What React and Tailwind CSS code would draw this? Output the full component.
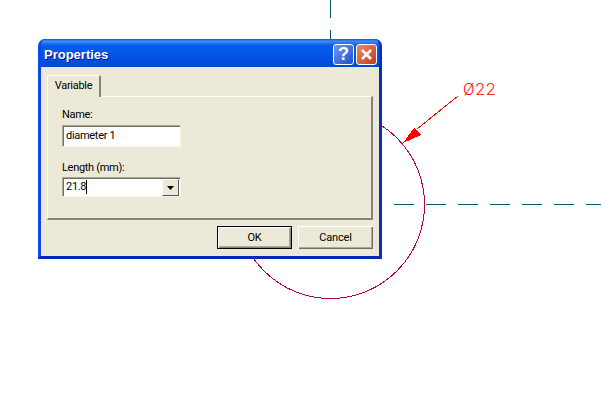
const XpButton = ({ label, isDefault }) => (
  <button className={`h-[23px] w-[75px] pt-[2px] bg-[#ece9d8] text-[11px] tracking-[-0.2px] text-black flex items-center justify-center ${isDefault ? "border border-black shadow-[inset_1px_1px_0_#fff,inset_-1px_-1px_0_#858477,inset_-2px_-2px_0_#aca899]" : "shadow-[inset_1px_1px_0_#fff,inset_-1px_-1px_0_#716f64,inset_-2px_-2px_0_#aca899]"}`}>
    {label}
  </button>
)

const App = () => {
  return (
    <div className="relative w-[601px] h-[416px] bg-white overflow-hidden" style={{ fontFamily: 'Roboto, "Liberation Sans", sans-serif' }}>
      {/* cad drawing behind the dialog */}
      <svg className="absolute inset-0" width="601" height="416" shapeRendering="crispEdges">
        <line x1="330.5" y1="0" x2="330.5" y2="18" stroke="#045a64" />
        <line x1="330.5" y1="30" x2="330.5" y2="40" stroke="#045a64" />
        <line x1="394" y1="204.5" x2="601" y2="204.5" stroke="#045a64" strokeDasharray="20 12" />
        <circle cx="330.5" cy="204.5" r="94" fill="none" stroke="#b0005a" />
        <line x1="458" y1="96" x2="417" y2="129" stroke="#ff0000" />
        <polygon points="403,143 414,128 421,135" fill="#ff0000" />
      </svg>
      <div className="absolute left-[463px] top-[79px] text-[17px] leading-[20px] tracking-[1px] font-light text-[#ff0000]">Ø22</div>

      <div className="absolute left-[38px] top-[39px] w-[344px] h-[220px] flex flex-col rounded-t-[7px] overflow-hidden bg-[#0831d9] border-x-[3px] border-b-[3px] border-l-[#0a4ae6] border-r-[#0a2cc0] border-b-[#0426b8]">
        <div className="h-[28px] shrink-0 flex items-center justify-between pl-[3px] pr-[2px] bg-[linear-gradient(to_bottom,#0a58e0_0%,#3d8ff5_8%,#0a5ce8_22%,#0055e5_60%,#0348d0_100%)]">
          <span className="mt-[4px] text-[13px] font-bold text-white [text-shadow:1px_1px_0_#0f1089]" style={{ fontFamily: '"Liberation Sans", sans-serif' }}>Properties</span>
          <div className="flex gap-[2px] mt-[2px]">
            <div className="w-[21px] h-[21px] rounded-[3px] border border-white bg-gradient-to-br from-[#6f96f0] to-[#1f4fd0] flex items-center justify-center text-white text-[18px] font-bold leading-none" style={{ fontFamily: '"Liberation Sans", sans-serif' }}>?</div>
            <div className="w-[21px] h-[21px] rounded-[3px] border border-white bg-gradient-to-br from-[#e88a68] to-[#c53a14] flex items-center justify-center">
              <svg width="13" height="13" viewBox="0 0 13 13"><path d="M2 2 L11 11 M11 2 L2 11" stroke="#fff" strokeWidth="2.6" /></svg>
            </div>
          </div>
        </div>

        <div className="flex-1 flex flex-col bg-[#ece9d8] px-[6px] pt-[8px] text-[11px] tracking-[-0.3px] text-black">
          <div className="relative z-10 -mb-px w-[54px] h-[22px] pb-[1px] bg-[#ece9d8] border-t border-l border-r-2 border-t-white border-l-white border-r-[#858477] rounded-t-[2px] flex items-center justify-center">Variable</div>
          <div className="h-[124px] border-t border-l border-t-white border-l-white border-r-2 border-b-2 border-r-[#858477] border-b-[#858477] pl-[14px] pt-[11px] flex flex-col">
            <div className="leading-[14px] mb-[3px]">Name:</div>
            <div className="w-[119px] h-[22px] bg-white border border-[#aca899] border-r-[#f5f3ea] border-b-[#f5f3ea] shadow-[inset_1px_1px_0_#716f64] pl-[3px] leading-[19px]">diameter 1</div>
            <div className="leading-[14px] mt-[14px] mb-[2px]">Length (mm):</div>
            <div className="w-[119px] h-[20px] bg-white border border-[#aca899] border-r-[#f5f3ea] border-b-[#f5f3ea] shadow-[inset_1px_1px_0_#716f64] pl-[3px] flex justify-between">
              <span className="border-r border-black h-[14px] mt-[2px] leading-[14px]">21.8</span>
              <div className="w-[17px] h-[17px] mt-px mr-px bg-[#ece9d8] border border-t-white border-l-white border-r-[#555] border-b-[#555] flex items-center justify-center">
                <svg width="7" height="4" viewBox="0 0 7 4"><polygon points="0,0 7,0 3.5,4" fill="#000" /></svg>
              </div>
            </div>
          </div>
          <div className="flex justify-end gap-[6px] mt-[6px]">
            <XpButton label="OK" isDefault />
            <XpButton label="Cancel" />
          </div>
        </div>
      </div>
    </div>
  )
}

export default App
